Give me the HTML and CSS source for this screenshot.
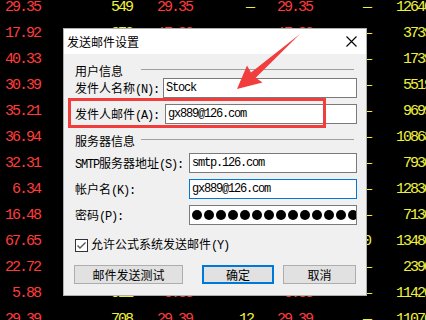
FILE: index.html
```html
<!DOCTYPE html>
<html lang="zh">
<head>
<meta charset="utf-8">
<title>发送邮件设置</title>
<link rel="stylesheet" href="styles.css">
</head>
<body>
<div class="quotes">
  <div class="row"><span class="r">29.35</span><span class="y">549</span><span class="r">29.35</span><span class="y">—</span><span class="r">29.35</span><span class="y">—</span><span class="y">12640</span></div>
  <div class="row"><span class="r">17.92</span><span class="y">373</span><span class="r">17.92</span><span class="y">—</span><span class="r">17.92</span><span class="y">—</span><span class="y">3739</span></div>
  <div class="row"><span class="r">40.33</span><span class="y">173</span><span class="r">40.33</span><span class="y">—</span><span class="r">40.33</span><span class="y">—</span><span class="y">1739</span></div>
  <div class="row"><span class="r">30.39</span><span class="y">551</span><span class="r">30.39</span><span class="y">—</span><span class="r">30.39</span><span class="y">—</span><span class="y">5519</span></div>
  <div class="row"><span class="r">35.21</span><span class="y">969</span><span class="r">35.21</span><span class="y">—</span><span class="r">35.21</span><span class="y">—</span><span class="y">9699</span></div>
  <div class="row"><span class="r">36.94</span><span class="y">108</span><span class="r">36.94</span><span class="y">—</span><span class="r">36.94</span><span class="y">—</span><span class="y">10868</span></div>
  <div class="row"><span class="r">32.31</span><span class="y">793</span><span class="r">32.31</span><span class="y">—</span><span class="r">32.31</span><span class="y">—</span><span class="y">7930</span></div>
  <div class="row"><span class="r">6.34</span><span class="y">128</span><span class="r">6.34</span><span class="y">—</span><span class="r">6.34</span><span class="y">—</span><span class="y">12830</span></div>
  <div class="row"><span class="r">16.48</span><span class="y">713</span><span class="r">16.48</span><span class="y">—</span><span class="r">16.48</span><span class="y">—</span><span class="y">7130</span></div>
  <div class="row"><span class="r">67.65</span><span class="y">134</span><span class="r">67.65</span><span class="y">—</span><span class="r">67.65</span><span class="y">10</span><span class="y">13480</span></div>
  <div class="row"><span class="r">22.72</span><span class="y">239</span><span class="r">22.72</span><span class="y">—</span><span class="r">22.72</span><span class="y">—</span><span class="y">2390</span></div>
  <div class="row"><span class="r">5.88</span><span class="y">911</span><span class="r">5.88</span><span class="y">—</span><span class="r">5.88</span><span class="y">—</span><span class="y">11420</span></div>
  <div class="row"><span class="r">29.39</span><span class="y">708</span><span class="r">29.39</span><span class="y">12</span><span class="r">29.39</span><span class="y">—</span><span class="y">11070</span></div>
</div>

<div class="dialog">
  <div class="titlebar">
    <span class="title">发送邮件设置</span>
    <svg class="close" viewBox="0 0 11 11" aria-label="关闭"><path d="M0.5 0.5 L10.5 10.5 M10.5 0.5 L0.5 10.5" stroke="#000" stroke-width="1.1" fill="none"/></svg>
  </div>
  <div class="body">
    <div class="group"><span class="gtext">用户信息</span><i class="rule"></i></div>
    <div class="field f-name">
      <label>发件人名称<span class="lat">(N):</span></label>
      <div class="input">Stock</div>
    </div>
    <div class="field f-mail">
      <label>发件人邮件<span class="lat">(A):</span></label>
      <div class="input">gx889@126.com</div>
      <div class="highlight"></div>
    </div>
    <div class="group g2"><span class="gtext">服务器信息</span><i class="rule"></i></div>
    <div class="field f-srv f-s">
      <label><span class="lat">SMTP</span>服务器地址<span class="lat">(S):</span></label>
      <div class="input">smtp.126.com</div>
    </div>
    <div class="field f-srv f-k">
      <label>帐户名<span class="lat">(K):</span></label>
      <div class="input focus">gx889@126.com</div>
    </div>
    <div class="field f-srv f-k">
      <label>密码<span class="lat">(P):</span></label>
      <div class="input pw"><i></i><i></i><i></i><i></i><i></i><i></i><i></i><i></i><i></i><i></i><i></i><i></i><i></i><i></i><i></i></div>
    </div>
    <div class="check">
      <svg class="cbox" viewBox="0 0 13 13"><rect x="0.5" y="0.5" width="12" height="12" fill="#fff" stroke="#333"/><path d="M2.5 6.5 L5 9 L10.5 3.5" stroke="#555" stroke-width="1.4" fill="none"/></svg>
      <span>允许公式系统发送邮件<span class="lat">(Y)</span></span>
    </div>
    <div class="buttons">
      <button class="btn b-test">邮件发送测试</button>
      <button class="btn b-ok">确定</button>
      <button class="btn b-cancel">取消</button>
    </div>
  </div>
</div>

<svg class="arrow" viewBox="0 0 426 320">
  <polygon points="300,34 255.7,77.8 262.5,82.5 237,89 247,65.5 251,72.6" fill="#f23d3d"/>
</svg>
</body>
</html>
```
FILE: styles.css
```css
* { box-sizing: border-box; }
html, body { margin: 0; padding: 0; }
body {
  width: 426px;
  height: 320px;
  overflow: hidden;
  background: #000;
  position: relative;
  font-family: "Noto Sans CJK SC", sans-serif;
}

/* background quote table */
.quotes {
  margin-top: -5px;
  font-family: "Liberation Mono", monospace;
  font-size: 15px;
  letter-spacing: -2px;
}
.row {
  display: grid;
  grid-template-columns: 40px 92px 60px 61px 59px 58px 61px;
  height: 26px;
  align-items: center;
  width: 431px;
}
.row span {
  text-align: right;
  line-height: 14px;
  white-space: nowrap;
}
.r { color: #ff3c3c; }
.y { color: #f0f03c; }

/* dialog window */
.dialog {
  position: absolute;
  left: 63px;
  top: 28px;
  width: 304px;
  height: 268px;
  border: 1px solid #b0b0b0;
  background: #f0f0f0;
  display: flex;
  flex-direction: column;
}
.titlebar {
  height: 25px;
  background: #fff;
  display: flex;
  align-items: center;
  justify-content: space-between;
  padding: 0 9px 0 3px;
  font-size: 12px;
  color: #000;
}
.close { width: 11px; height: 11px; display: block; }

.body {
  padding: 10px 9px 0 11px;
  display: flex;
  flex-direction: column;
  font-size: 12px;
  color: #000;
}
.lat {
  font-family: "Liberation Mono", monospace;
  letter-spacing: -1.2px;
}
.group {
  display: flex;
  height: 14px;
  line-height: 14px;
  margin-right: 3px;
}
.gtext { width: 66px; white-space: nowrap; }
.rule {
  flex: 1;
  height: 1px;
  background: #a0a0a0;
  margin-top: 5px;
}
.g2 { margin-top: 10px; }

.field {
  display: flex;
  height: 20px;
  position: relative;
}
.field label {
  line-height: 20px;
  white-space: nowrap;
}
.f-name label { width: 88px; }
.f-mail { margin-top: 6px; }
.f-mail label { width: 90px; }
.f-srv label { width: 114px; }
.f-s { margin-top: 5px; }
.f-k { margin-top: 6px; }

.input {
  flex: 1;
  border: 1px solid #7a7a7a;
  background: #fff;
  padding: 0 2px;
  font-family: "Liberation Mono", monospace;
  font-size: 12px;
  letter-spacing: -1.2px;
  line-height: 18px;
  overflow: hidden;
  white-space: nowrap;
}
.input.focus { border-color: #0078d7; }
.pw {
  display: flex;
  align-items: center;
  gap: 2px;
}
.pw i {
  flex: none;
  width: 10px;
  height: 10px;
  border-radius: 50%;
  background: #000;
}

.highlight {
  position: absolute;
  left: -7px;
  top: -6px;
  width: 258px;
  height: 30px;
  border: 3px solid #f23d3d;
}

.check {
  margin-top: 13px;
  height: 14px;
  display: flex;
  align-items: center;
  gap: 3px;
  line-height: 14px;
  white-space: nowrap;
}
.cbox { width: 13px; height: 13px; display: block; flex: none; }

.buttons {
  margin-top: 13px;
  margin-left: -1px;
  height: 19px;
  display: flex;
}
.btn {
  height: 19px;
  padding: 0;
  margin: 0;
  background: #e1e1e1;
  border: 1px solid #adadad;
  font-family: "Noto Sans CJK SC", sans-serif;
  font-size: 12px;
  line-height: 15px;
  color: #000;
}
.b-test { width: 109px; }
.b-ok { width: 72px; margin-left: 19px; border: 2px solid #0078d7; }
.b-cancel { width: 73px; margin-left: 9px; }

.arrow {
  position: absolute;
  left: 0;
  top: 0;
  width: 426px;
  height: 320px;
  pointer-events: none;
}
```
